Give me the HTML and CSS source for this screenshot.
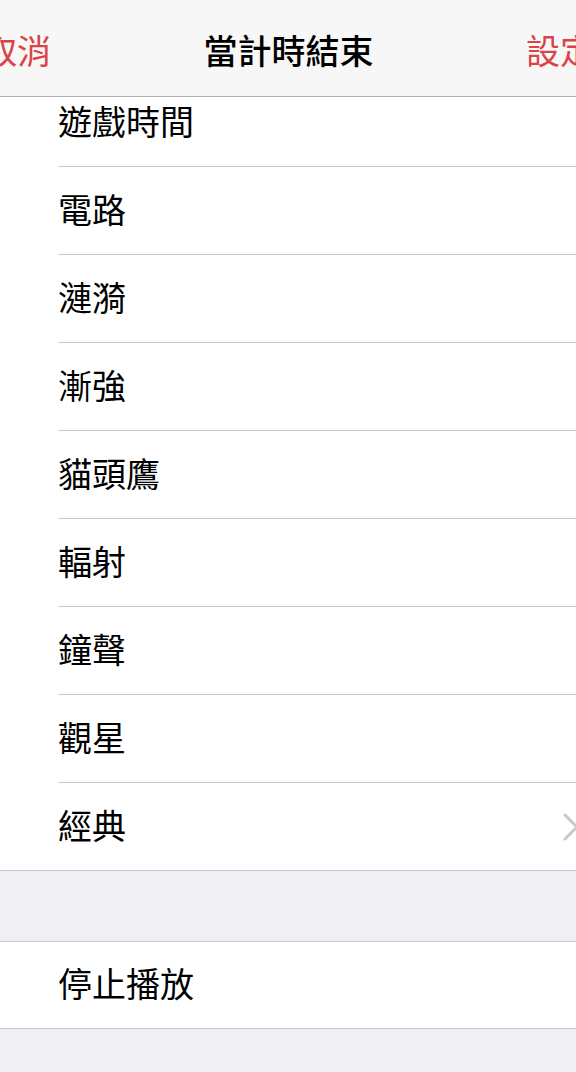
FILE: index.html
```html
<!DOCTYPE html>
<html lang="zh-Hant">
<head>
<meta charset="utf-8">
<title>當計時結束</title>
<link rel="stylesheet" href="styles.css">
</head>
<body>
<header class="nav">
  <div class="nav-inner">
    <span class="nav-btn">取消</span>
    <span class="nav-title">當計時結束</span>
    <span class="nav-btn">設定</span>
  </div>
</header>
<main class="clip">
  <ul class="group list">
    <li class="row"><div class="row-inner"><span>遊戲時間</span></div></li>
    <li class="row"><div class="row-inner"><span>電路</span></div></li>
    <li class="row"><div class="row-inner"><span>漣漪</span></div></li>
    <li class="row"><div class="row-inner"><span>漸強</span></div></li>
    <li class="row"><div class="row-inner"><span>貓頭鷹</span></div></li>
    <li class="row"><div class="row-inner"><span>輻射</span></div></li>
    <li class="row"><div class="row-inner"><span>鐘聲</span></div></li>
    <li class="row"><div class="row-inner"><span>觀星</span></div></li>
    <li class="row last"><div class="row-inner"><span>經典</span>
      <svg class="chevron" width="18" height="30" viewBox="0 0 18 30"><path d="M3 3 L15 15 L3 27" fill="none" stroke="#c7c7cc" stroke-width="3" stroke-linecap="round" stroke-linejoin="round"/></svg>
    </div></li>
  </ul>
  <ul class="group stop">
    <li class="row single"><div class="row-inner"><span>停止播放</span></div></li>
  </ul>
</main>
</body>
</html>
```

FILE: styles.css
```css
html, body {
  margin: 0;
  padding: 0;
}
body {
  width: 576px;
  height: 1072px;
  overflow: hidden;
  background: #efeff4;
  font-family: "Noto Sans CJK TC", "Noto Sans CJK SC", sans-serif;
  color: #000;
}
.nav {
  height: 96px;
  background: #f7f7f7;
  border-bottom: 1px solid #b2b2b2;
  overflow: hidden;
  position: relative;
  z-index: 2;
}
.nav-inner {
  height: 96px;
  box-sizing: border-box;
  padding-top: 3px;
  display: flex;
  align-items: center;
  justify-content: space-between;
  margin: 0 -18px 0 -17px;
}
.nav-btn {
  font-size: 34px;
  line-height: 34px;
  color: #db4349;
}
.nav-title {
  font-size: 34px;
  line-height: 34px;
  font-weight: 500;
}
.clip {
  overflow: hidden;
}
.group {
  list-style: none;
  margin: 0;
  padding: 0;
  background: #fff;
  border-bottom: 1px solid #c8c7cc;
}
.list {
  margin-top: -18px;
}
.stop {
  margin-top: 70px;
  border-top: 1px solid #c8c7cc;
}
.row {
  padding-left: 58px;
}
.row-inner {
  height: 88px;
  box-sizing: border-box;
  padding-bottom: 4px;
  border-bottom: 1px solid #c8c7cc;
  display: flex;
  align-items: center;
  justify-content: space-between;
  font-size: 34px;
  line-height: 34px;
}
.row.last .row-inner {
  height: 87px;
  border-bottom: none;
}
.row.single .row-inner {
  height: 86px;
  border-bottom: none;
}
.chevron {
  margin-right: -4px;
  margin-top: 4px;
}
```
